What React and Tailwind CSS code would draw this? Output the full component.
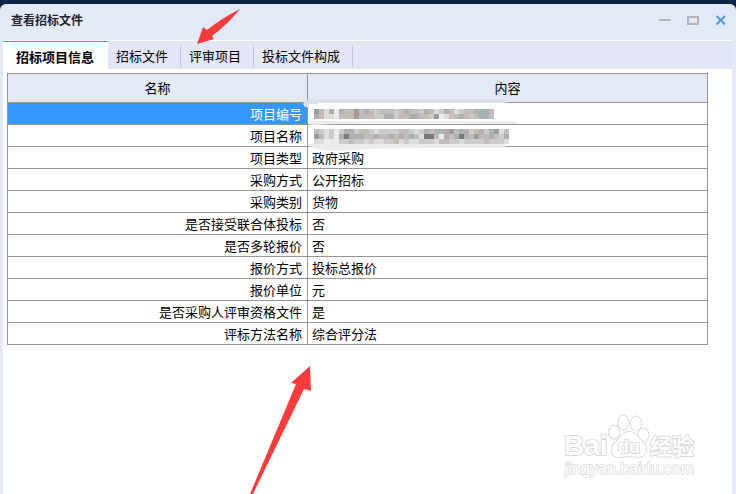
import { useState } from 'react';

const tabs = ['招标项目信息', '招标文件', '评审项目', '投标文件构成'];

const rows = [
  { name: '项目编号', mosaic: 'code' },
  { name: '项目名称', mosaic: 'title' },
  { name: '项目类型', value: '政府采购' },
  { name: '采购方式', value: '公开招标' },
  { name: '采购类别', value: '货物' },
  { name: '是否接受联合体投标', value: '否' },
  { name: '是否多轮报价', value: '否' },
  { name: '报价方式', value: '投标总报价' },
  { name: '报价单位', value: '元' },
  { name: '是否采购人评审资格文件', value: '是' },
  { name: '评标方法名称', value: '综合评分法' },
];

// colour of each 5px block, one string per line of blocks
const shades = {
  a: '#777a7e', b: '#9c9b9a', c: '#b0aeae', d: '#bfbcba', e: '#cccbca', f: '#dddcdb', g: '#edecec', h: '#ab978f', i: '#a8b0b8',
};
const mosaics = {
  code: {
    top: 6,
    lines: ['bdfcgcddhdcdedddedcddecdfecdfeddciid', 'cdffgdddhdddeecceddccddebgfddcdedicd'],
    smear: 'M-5 1Q-2 -4 6 -4H198V0H10V1H1V4H-3Z',
    fill: '#dbe1e8',
  },
  title: {
    top: 4,
    lines: [
      'defegecceddefeeeeddefecdcicbdccedceibfd',
      'bdfegcacccddcddcdcdcdfaadgcdcacdbddcdec',
      'ffgggeedeefeffeedfeffeeefddeefeeeedeeef',
    ],
    smear: 'M2 0Q60 -3 209 -1V-4H3ZM2 19H197V23H120Q60 23 30 26Q8 26 0 20Z',
    fill: '#ececec',
  },
};

function Mosaic({ kind }) {
  const { top, lines, smear, fill } = mosaics[kind];
  return (
    <svg width="210" height="22" viewBox="0 0 210 22" className="absolute left-0 top-0 overflow-visible" aria-hidden="true">
      <path d={smear} fill={fill} />
      <g shapeRendering="crispEdges">
        {lines.map((line, y) =>
          line.split('').map((s, x) => (
            <rect key={`${x}-${y}`} x={x * 5 + 6} y={y * 5 + top} width="5" height="5" fill={shades[s]} />
          ))
        )}
      </g>
    </svg>
  );
}

function Watermark() {
  return (
    <svg width="140" height="74" viewBox="0 0 140 74" className="absolute right-9 bottom-[10px]" role="img" aria-label="Baidu 经验">
      <g fill="#fff" stroke="#dadada" strokeWidth="2" strokeLinejoin="round" style={{ paintOrder: 'stroke' }}>
        <text x="4" y="45" fontSize="28" fontWeight="bold" fontFamily="Liberation Sans, sans-serif">Bai</text>
        <ellipse cx="54" cy="22" rx="5" ry="6.500" />
        <ellipse cx="63.500" cy="12.500" rx="5" ry="7" />
        <ellipse cx="76" cy="13.500" rx="5" ry="7" />
        <ellipse cx="83.500" cy="25" rx="5" ry="6.500" />
        <path d="M69 22c-7 0-9 6-13 10-6 5-6 15 3 15 4 0 7-1 10-1s7 1 10 1c8 0 9-10 4-15-5-4-7-10-14-10z" />
        <text x="58" y="43" fontSize="18" fontWeight="bold" fontFamily="Liberation Sans, sans-serif">du</text>
        <text x="90" y="44" fontSize="22" fontWeight="bold" fontFamily="Noto Sans CJK SC, sans-serif">经验</text>
        <text x="5" y="64" fontSize="16" strokeWidth="1.500" fontFamily="Liberation Sans, sans-serif">jingyan.baidu.com</text>
      </g>
    </svg>
  );
}

export default function App() {
  const [active, setActive] = useState(0);

  return (
    <div className="relative flex min-h-screen flex-col overflow-hidden bg-[#0f2547] pt-1 text-[13px] leading-5 text-black font-['Noto_Sans_CJK_SC',sans-serif]">
      <div className="flex grow flex-col rounded-t-md bg-[#e3eaf7]">
        <header className="flex h-9 items-center justify-between pb-1 pl-[11px] pr-[9px]">
          <h1 className="text-[12px] font-bold text-[#1f2430]">查看招标文件</h1>
          <div className="flex items-center gap-4">
            <button aria-label="最小化">
              <svg width="12" height="12" viewBox="0 0 12 12"><path d="M0 6h12" stroke="#b3b5b9" strokeWidth="2" /></svg>
            </button>
            <button aria-label="最大化">
              <svg width="12" height="12" viewBox="0 0 12 12"><path d="M1 3h10v7H1z" fill="none" stroke="#b3b3b5" strokeWidth="2" /></svg>
            </button>
            <button aria-label="关闭">
              <svg width="12" height="12" viewBox="0 0 12 12"><path d="M1.500 2l8.500 8.500m0-8.500l-8.500 8.500" stroke="#4a9be8" strokeWidth="2" /></svg>
            </button>
          </div>
        </header>

        <main className="ml-[3px] mr-1 grow bg-white">
          <nav className="flex h-[29px] items-stretch border-t border-white bg-[#e2e6f6]">
            {tabs.map((tab, i) => (
              <button
                key={tab}
                onClick={() => setActive(i)}
                className={
                  active === i
                    ? 'border-t border-t-[#3aa0cc] bg-white pl-[13px] pr-[14px] pt-[2px] font-bold'
                    : 'mb-[2px] mt-1 border-r border-[#c3c6d0] pl-2 pr-3'
                }
              >
                {tab}
              </button>
            ))}
          </nav>

          <div className="pl-1 pr-6 pt-1">
            <table className="w-full table-fixed border-collapse border border-[#969696]">
              <colgroup>
                <col className="w-3/7" />
                <col />
              </colgroup>
              <thead>
                <tr className="h-[29px] bg-[#e3eaf5]">
                  <th className="border border-[#969696] p-0 font-normal">名称</th>
                  <th className="border border-[#969696] p-0 font-normal">内容</th>
                </tr>
              </thead>
              <tbody>
                {rows.map((row, i) => (
                  <tr key={row.name} className="h-[22px]">
                    <td className={`border border-[#969696] p-0 pr-[5px] text-right ${i === 0 ? 'bg-[#3399ff] text-white' : ''}`}>{row.name}</td>
                    <td className="relative border border-[#969696] p-0 pl-1">
                      {row.mosaic ? <Mosaic kind={row.mosaic} /> : row.value}
                    </td>
                  </tr>
                ))}
              </tbody>
            </table>
          </div>
        </main>
      </div>

      <Watermark />

      {/* red pointers */}
      <svg width="320" height="494" viewBox="0 0 320 494" className="pointer-events-none absolute left-0 top-0" fill="#fb3b3b" aria-hidden="true">
        <path d="M197 44L203 27L207 30Q222 18 240 9Q228 24 212 36L214 39Z" />
        <path d="M310 366L291 383L296 384L250 494H253L304 389L311 391Z" />
      </svg>
    </div>
  );
}
